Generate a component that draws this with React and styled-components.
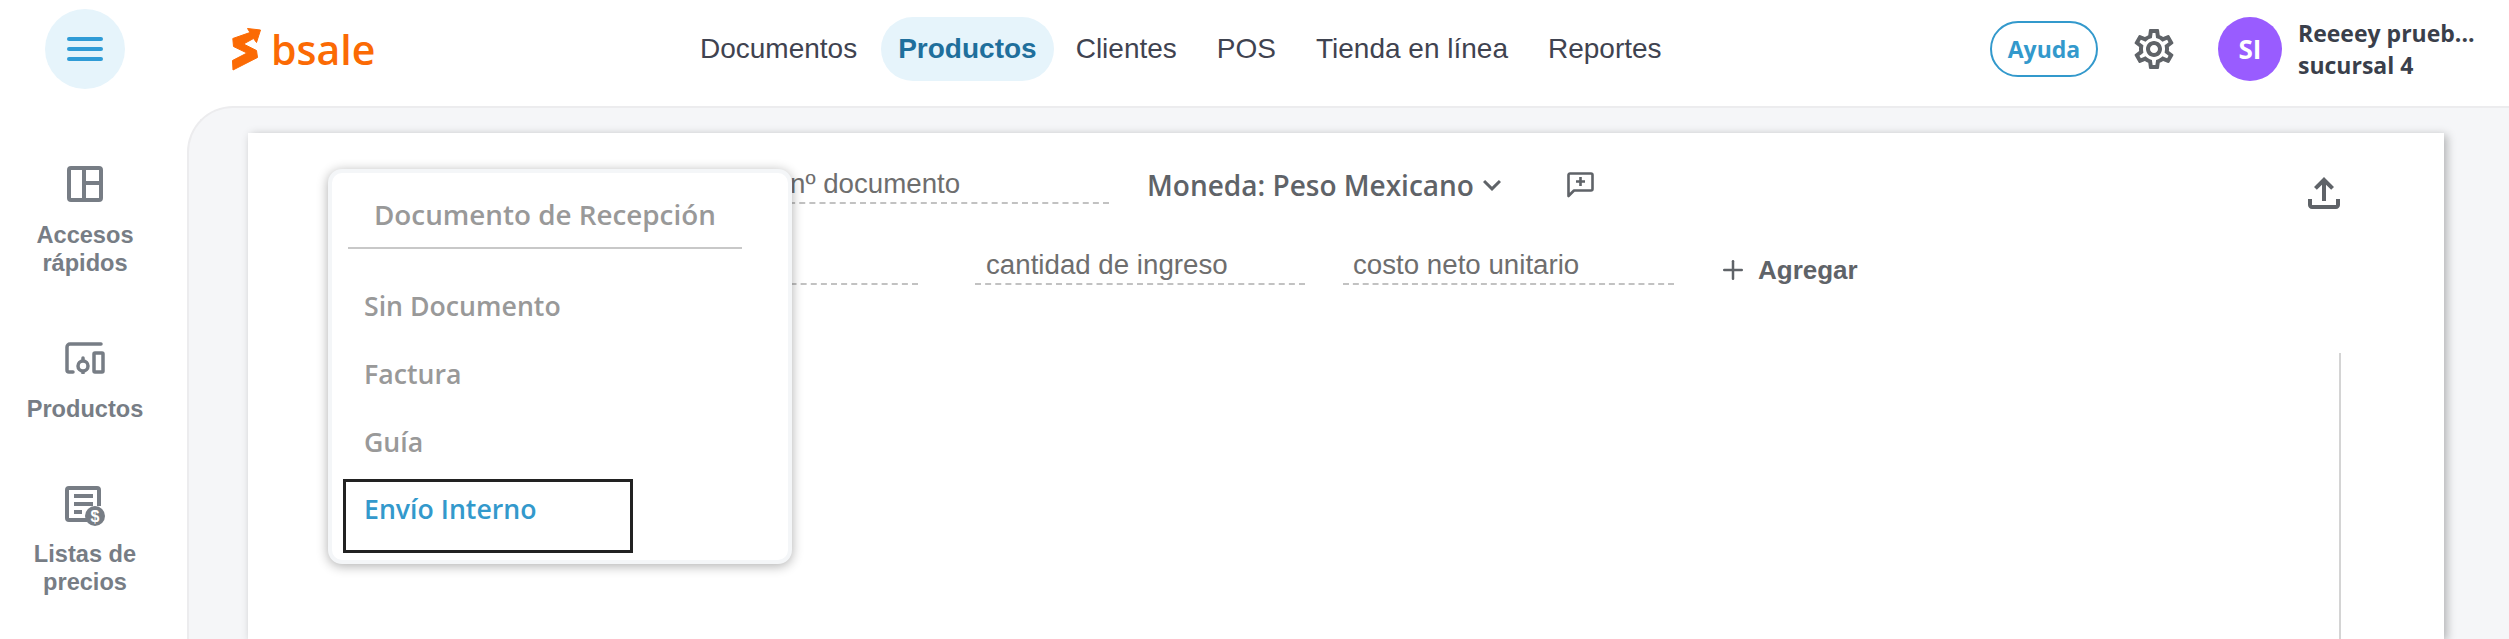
import React from "react";
import styled, { createGlobalStyle } from "styled-components";
import { MdOutlineFileUpload, MdKeyboardArrowDown, MdOutlineSettings } from "react-icons/md";
import { LuPlus } from "react-icons/lu";

const GlobalStyle = createGlobalStyle`
  html, body { margin: 0; padding: 0; background: #fff; }
  * { box-sizing: border-box; }
`;

const Page = styled.div`
  width: 2509px;
  height: 639px;
  overflow: hidden;
  display: flex;
  flex-direction: column;
  font-family: "Liberation Sans", Arial, sans-serif;
`;

/* top bar */
const Header = styled.header`
  height: 106px;
  flex: none;
  display: flex;
  align-items: center;
  position: relative;
  padding-bottom: 8px;
`;
const MenuButton = styled.button`
  width: 80px;
  height: 80px;
  margin-left: 45px;
  border: none;
  border-radius: 50%;
  background: #e6f4fb;
  display: flex;
  flex-direction: column;
  align-items: center;
  justify-content: center;
  gap: 6px;
  padding: 0;
`;
const MenuLine = styled.span`
  width: 36px;
  height: 4px;
  border-radius: 2px;
  background: #2f9bd6;
`;
const Logo = styled.div`
  display: flex;
  align-items: center;
  gap: 9px;
  margin-left: 107px;
  width: 448px;
`;
const LogoWord = styled.span`
  font-family: "Open Sans", sans-serif;
  font-size: 41px;
  font-weight: 600;
  line-height: 44px;
  color: #fb6a04;
`;
const Nav = styled.nav`
  display: flex;
  align-items: center;
`;
const NavItem = styled.a`
  height: 64px;
  display: flex;
  align-items: center;
  margin: 0 ${(p) => (p.$active ? "2px" : "0")} 0 ${(p) => (p.$active ? "4px" : "0")};
  padding: 0 ${(p) => (p.$active ? "17px" : "20px")};
  border-radius: 32px;
  font-size: 28px;
  font-weight: ${(p) => (p.$active ? 700 : 400)};
  color: ${(p) => (p.$active ? "#1f6f9c" : "#3f4350")};
  background: ${(p) => (p.$active ? "#e6f4fb" : "transparent")};
`;
const HeaderRight = styled.div`
  margin-left: auto;
  display: flex;
  align-items: center;
  width: 519px;
`;
const HelpButton = styled.button`
  width: 108px;
  height: 56px;
  padding: 0;
  border: 2px solid #3399cc;
  border-radius: 28px;
  background: #fff;
  font-family: "Open Sans", sans-serif;
  font-size: 23px;
  font-weight: 700;
  color: #3399cc;
`;
const GearSlot = styled.div`
  margin-left: 32px;
  display: flex;
  color: #5f6368;
`;
const Avatar = styled.div`
  width: 64px;
  height: 64px;
  margin-left: 40px;
  border-radius: 50%;
  background: #995cff;
  color: #fff;
  display: flex;
  align-items: center;
  justify-content: center;
  font-family: "Open Sans", sans-serif;
  font-size: 26px;
  font-weight: 700;
`;
const UserText = styled.div`
  margin-left: 16px;
  font-family: "Open Sans", sans-serif;
  font-size: 23px;
  font-weight: 700;
  line-height: 32px;
  color: #3a3f4b;
  white-space: nowrap;
`;

/* body */
const Body = styled.div`
  flex: 1;
  display: flex;
  min-height: 0;
`;
const Sidebar = styled.aside`
  width: 187px;
  flex: none;
  display: flex;
  flex-direction: column;
  align-items: center;
  padding-top: 53px;
  padding-right: 17px;
`;
const SideItem = styled.div`
  height: ${(p) => p.$h}px;
  display: flex;
  flex-direction: column;
  align-items: center;
  color: #777d85;
`;
const SideIcon = styled.div`
  height: 50px;
  display: flex;
  align-items: center;
  margin-bottom: ${(p) => p.$gap || 12}px;
`;
const SideLabel = styled.div`
  font-size: 23.6px;
  font-weight: 700;
  line-height: 28px;
  text-align: center;
`;
const Panel = styled.main`
  flex: 1;
  display: flex;
  background: #f5f6f8;
  border-top: 2px solid #ececee;
  border-left: 2px solid #ececee;
  border-top-left-radius: 46px;
  padding: 25px 65px 0 59px;
`;
const Card = styled.section`
  flex: 1;
  position: relative;
  display: flex;
  flex-direction: column;
  background: #fff;
  padding-top: 32px;
  box-shadow: 3px 2px 9px rgba(0, 0, 0, 0.28);
`;
const FormRow = styled.div`
  display: flex;
  align-items: center;
  height: 39px;
  margin-left: ${(p) => p.$left}px;
  margin-bottom: 42px;
`;
const Field = styled.input`
  width: ${(p) => p.$w || 330}px;
  height: 39px;
  margin-right: ${(p) => p.$gap || 0}px;
  flex: none;
  padding: 0 0 0 ${(p) => p.$inset || 11}px;
  border: none;
  border-bottom: 2px dashed #c2c2c2;
  outline: none;
  background: transparent;
  font-family: "Liberation Sans", Arial, sans-serif;
  font-size: 27.7px;
  &::placeholder { color: #6e6e6e; opacity: 1; }
`;
const Currency = styled.div`
  display: flex;
  align-items: center;
  width: 420px;
  font-family: "Open Sans", sans-serif;
  font-size: 28px;
  font-weight: 600;
  color: #5f6368;
  white-space: nowrap;
`;
const CommentSlot = styled.div`
  display: flex;
  color: #5f6368;
`;
const UploadSlot = styled.div`
  margin-left: auto;
  margin-right: 96px;
  align-self: flex-start;
  margin-top: 4px;
  height: 39px;
  color: #5f6368;
`;
const AddButton = styled.button`
  display: flex;
  align-items: center;
  gap: 10px;
  padding: 0;
  border: none;
  background: none;
  margin-top: 9px;
  font-family: "Liberation Sans", Arial, sans-serif;
  font-size: 26px;
  font-weight: 700;
  color: #5f6368;
`;
const TableArea = styled.div`
  flex: 1;
  margin-top: 26px;
  margin-right: 103px;
  border-right: 2px solid #d4d4d4;
`;

/* dropdown */
const Popover = styled.div`
  position: absolute;
  left: 80px;
  top: 36px;
  width: 464px;
  height: 395px;
  background: #fff;
  border: 4px solid #f4f6f8;
  border-radius: 14px;
  box-shadow: 0 2px 12px rgba(0, 0, 0, 0.32);
  font-family: "Open Sans", sans-serif;
  font-weight: 600;
  font-size: 26.7px;
  color: #999;
`;
const PopoverTitle = styled.div`
  width: 394px;
  height: 76px;
  margin-left: 16px;
  padding: 23px 0 0 26px;
  font-size: 27.8px;
  line-height: 36px;
  border-bottom: 2px solid #c8c8c8;
  white-space: nowrap;
`;
const MenuList = styled.div`
  margin: 26px 0 0 11px;
  width: 290px;
`;
const MenuItem = styled.div`
  height: ${(p) => (p.$focused ? 74 : 68)}px;
  padding: ${(p) => (p.$focused ? 9 : 13)}px 0 0 ${(p) => (p.$focused ? 18 : 21)}px;
  border: ${(p) => (p.$focused ? "3px solid #222" : "none")};
  line-height: 36px;
  color: ${(p) => (p.$focused ? "#3399cc" : "#999")};
`;

const AccessIcon = () => (
  <svg width="36" height="36" viewBox="0 0 36 36" fill="none" stroke="currentColor" strokeWidth="4">
    <rect x="2" y="2" width="32" height="32" rx="2" />
    <path d="M17 2v32M17 17h17" />
  </svg>
);

const ProductsIcon = () => (
  <svg width="40" height="32" viewBox="0 0 40 32" fill="none" stroke="currentColor" strokeWidth="3.5" strokeLinecap="round">
    <path d="M36 2H5a3 3 0 0 0-3 3v23a2 2 0 0 0 2 2h4" />
    <rect x="29" y="11" width="9" height="19" rx="1" />
    <circle cx="18" cy="24" r="5" />
    <path d="M18 16v2M18 30v1" />
  </svg>
);

const PricesIcon = () => (
  <svg width="40" height="40" viewBox="0 0 40 40" fill="none">
    <path d="M22 34H4a2 2 0 0 1-2-2V4a2 2 0 0 1 2-2h28a2 2 0 0 1 2 2v16" stroke="currentColor" strokeWidth="4" />
    <path d="M9 10h19M9 18h19M9 26h8" stroke="currentColor" strokeWidth="4" />
    <circle cx="30" cy="30" r="10" fill="currentColor" />
    <text x="30" y="36" textAnchor="middle" fontFamily="Liberation Sans" fontSize="16" fontWeight="700" fill="#fff">$</text>
  </svg>
);

const LogoMark = () => (
  <svg width="30" height="44" viewBox="232 27 30 44" fill="#fb6a04" stroke="#fb6a04" strokeWidth="1" strokeLinejoin="round">
    <path d="M247.500 28.500L260.500 30L256.500 42.500L253.500 38.500L243.500 44L256.500 50.500L257.500 57.500L233 70L232.500 60.500L247 53L233.500 46.500L232.800 38.500L250 32.500Z" />
  </svg>
);

const CommentIcon = () => (
  <svg width="27" height="26" viewBox="0 0 27 26" fill="none" stroke="currentColor" strokeWidth="2.600">
    <path d="M1.500 24V3a1.500 1.500 0 0 1 1.500-1.500h21a1.500 1.500 0 0 1 1.500 1.500v14a1.500 1.500 0 0 1-1.500 1.500H7z" strokeLinejoin="round" />
    <path d="M13.500 5v9M9 9.500h9" />
  </svg>
);

const App = () => (
  <Page>
    <GlobalStyle />
    <Header>
      <MenuButton>
        <MenuLine />
        <MenuLine />
        <MenuLine />
      </MenuButton>
      <Logo>
        <LogoMark />
        <LogoWord>bsale</LogoWord>
      </Logo>
      <Nav>
        <NavItem>Documentos</NavItem>
        <NavItem $active>Productos</NavItem>
        <NavItem>Clientes</NavItem>
        <NavItem>POS</NavItem>
        <NavItem>Tienda en línea</NavItem>
        <NavItem>Reportes</NavItem>
      </Nav>
      <HeaderRight>
        <HelpButton>Ayuda</HelpButton>
        <GearSlot>
          <MdOutlineSettings size={48} />
        </GearSlot>
        <Avatar>SI</Avatar>
        <UserText>
          Reeeey prueb...
          <br />
          sucursal 4
        </UserText>
      </HeaderRight>
    </Header>
    <Body>
      <Sidebar>
        <SideItem $h={174}>
          <SideIcon>
            <AccessIcon />
          </SideIcon>
          <SideLabel>
            Accesos
            <br />
            rápidos
          </SideLabel>
        </SideItem>
        <SideItem $h={148}>
          <SideIcon>
            <ProductsIcon />
          </SideIcon>
          <SideLabel>Productos</SideLabel>
        </SideItem>
        <SideItem $h={120}>
          <SideIcon $gap={9}>
            <PricesIcon />
          </SideIcon>
          <SideLabel>
            Listas de
            <br />
            precios
          </SideLabel>
        </SideItem>
      </Sidebar>
      <Panel>
        <Card>
          <FormRow $left={531}>
            <Field $gap={38} placeholder="nº documento" />
            <Currency>
              Moneda: Peso Mexicano
              <MdKeyboardArrowDown size={36} />
            </Currency>
            <CommentSlot>
              <CommentIcon />
            </CommentSlot>
            <UploadSlot>
              <MdOutlineFileUpload size={48} />
            </UploadSlot>
          </FormRow>
          <FormRow $left={340}>
            <Field $gap={57} />
            <Field $gap={38} placeholder="cantidad de ingreso" />
            <Field $gap={44} $w={331} $inset={10} placeholder="costo neto unitario" />
            <AddButton>
              <LuPlus size={30} />
              Agregar
            </AddButton>
          </FormRow>
          <TableArea />
          <Popover>
            <PopoverTitle>Documento de Recepción</PopoverTitle>
            <MenuList>
              <MenuItem>Sin Documento</MenuItem>
              <MenuItem>Factura</MenuItem>
              <MenuItem>Guía</MenuItem>
              <MenuItem $focused>Envío Interno</MenuItem>
            </MenuList>
          </Popover>
        </Card>
      </Panel>
    </Body>
  </Page>
);

export default App;
